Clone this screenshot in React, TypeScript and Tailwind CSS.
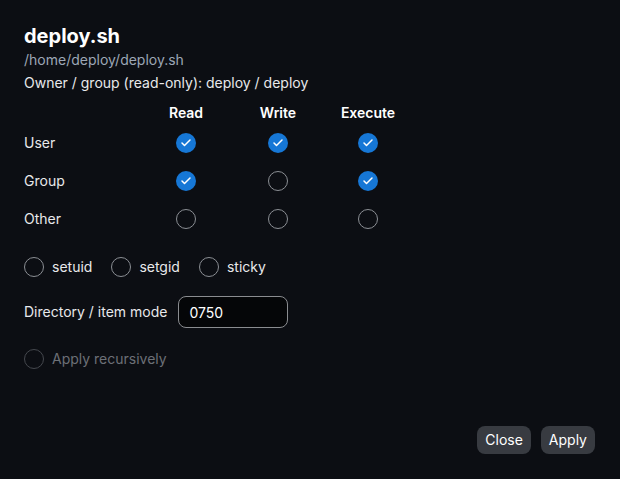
import { Check } from 'lucide-react';

const rows = [
  { label: 'User', perms: [true, true, true] },
  { label: 'Group', perms: [true, false, true] },
  { label: 'Other', perms: [false, false, false] },
];

const cols = ['Read', 'Write', 'Execute'];
const colWidths = ['w-[92px]', 'w-[92px]', 'w-[88px]'];

function Round({ checked, disabled }: { checked?: boolean; disabled?: boolean }) {
  if (checked) {
    return (
      <span className="flex h-5 w-5 items-center justify-center rounded-full bg-[#1677d6]">
        <Check size={12} strokeWidth={3} className="text-white" />
      </span>
    );
  }
  return (
    <span
      className={`block h-5 w-5 rounded-full border-[1.5px] ${
        disabled ? 'border-[#45484e]' : 'border-[#8b8e94]'
      }`}
    />
  );
}

export default function App() {
  return (
    <div
      className="flex h-screen w-full flex-col bg-[#0c0e13] px-6 pt-[22px] text-[#e8e9eb]"
      style={{ fontFamily: 'Inter, "Noto Sans", sans-serif' }}
    >
      <h1 className="text-xl font-bold leading-7 text-white">deploy.sh</h1>
      <p className="text-sm leading-5 text-[#9da7b6]">/home/deploy/deploy.sh</p>
      <p className="mt-[3px] text-sm leading-5">Owner / group (read-only): deploy / deploy</p>

      <div className="mt-[10px] flex flex-col text-sm">
        <div className="flex h-5 items-center">
          <div className="w-[116px]" />
          {cols.map((c, i) => (
            <div key={c} className={`${colWidths[i]} text-center font-semibold text-white`}>
              {c}
            </div>
          ))}
        </div>
        <div className="mt-px flex flex-col">
          {rows.map((r) => (
            <div key={r.label} className="flex h-[38px] items-center">
              <div className="w-[116px]">{r.label}</div>
              {r.perms.map((p, i) => (
                <div key={i} className={`${colWidths[i]} flex justify-center`}>
                  <Round checked={p} />
                </div>
              ))}
            </div>
          ))}
        </div>
      </div>

      <div className="mt-[19px] flex items-center gap-[19px] text-sm">
        {['setuid', 'setgid', 'sticky'].map((s) => (
          <label key={s} className="flex items-center gap-2">
            <Round />
            <span>{s}</span>
          </label>
        ))}
      </div>

      <div className="mt-[19px] flex items-center gap-[11px] text-sm">
        <span>Directory / item mode</span>
        <input
          defaultValue="0750"
          className="h-8 w-[110px] rounded-lg border border-[#8a8c90] bg-[#050608] px-[10px] text-sm text-white outline-none"
        />
      </div>

      <div className="mt-[21px] flex items-center gap-2 text-sm text-[#6c7077]">
        <Round disabled />
        <span>Apply recursively</span>
      </div>

      <div className="flex flex-1 items-end justify-end gap-[10px] pb-[25px] pr-px">
        <button className="h-7 rounded-lg bg-[#383b41] px-2 text-sm text-white">Close</button>
        <button className="h-7 rounded-lg bg-[#383b41] px-2 text-sm text-white">Apply</button>
      </div>
    </div>
  );
}
